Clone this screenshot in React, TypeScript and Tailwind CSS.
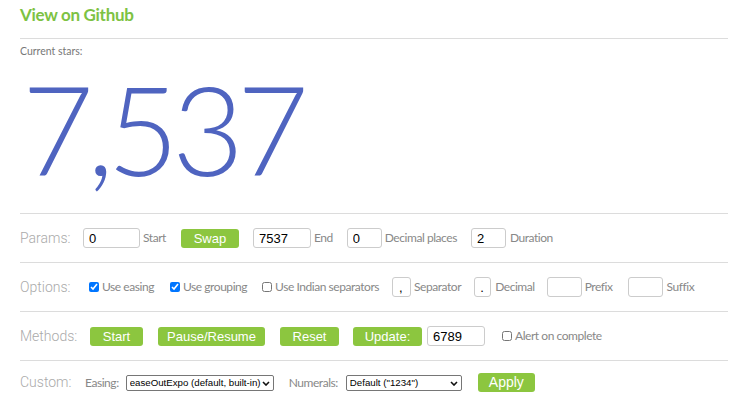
import React from "react";

const label =
  "shrink-0 whitespace-nowrap text-[12px] tracking-[-0.45px] text-[#888] font-['Lato',sans-serif]";
const rowTitle = "w-[63px] shrink-0 text-[14px] font-light text-[#aaa] font-['Roboto',sans-serif]";
const input =
  "h-[20px] shrink-0 rounded-[3px] border border-[#ccc] bg-white px-[5px] text-[13px] text-black font-['Liberation_Sans',Arial,sans-serif] outline-none";
const btn =
  "h-[19px] shrink-0 rounded-[3px] bg-[#8cc63f] text-[13px] text-white font-['Liberation_Sans',Arial,sans-serif] leading-[19px]";

function Row({ title, children, last }: { title: string; children: React.ReactNode; last?: boolean }) {
  return (
    <div className={`flex items-center border-t border-[#dcdcdc] ${last ? "h-[44px]" : "h-[49px]"}`}>
      <span className={rowTitle}>{title}</span>
      {children}
    </div>
  );
}

function Check({ checked, text, className }: { checked?: boolean; text: string; className?: string }) {
  return (
    <label className={`flex shrink-0 items-center ${className ?? ""}`}>
      <input type="checkbox" defaultChecked={checked} className="m-0 mr-[3px] h-[10px] w-[10px]" />
      <span className={label}>{text}</span>
    </label>
  );
}

function Select({ value, className }: { value: string; className: string }) {
  return (
    <div className={`relative h-[16px] shrink-0 ${className}`}>
      <select className="block h-[16px] w-full appearance-none rounded-[2px] border border-[#767676] bg-white pl-[3px] pr-[12px] text-[9.7px] leading-[14px] text-black font-['Liberation_Sans',Arial,sans-serif]">
        <option>{value}</option>
      </select>
      <svg
        className="pointer-events-none absolute right-[4px] top-[6px]"
        width="8"
        height="5"
        viewBox="0 0 8 5"
        fill="none"
      >
        <path d="M1 1L4 4L7 1" stroke="#111" strokeWidth="1.6" />
      </svg>
    </div>
  );
}

export default function App() {
  return (
    <div className="w-[730px] h-[404px] overflow-hidden bg-white">
      <div className="ml-5 w-[708px]">
        <div className="h-[38px] pt-[4px]">
          <h1 className="text-[17px] leading-[22px] font-bold tracking-[-0.3px] text-[#7dc243] font-['Lato',sans-serif]">
            View on Github
          </h1>
        </div>
        <div className="h-[175px] border-t border-[#dcdcdc]">
          <p className="mt-[6px] text-[10.5px] leading-[12px] text-[#777] font-['Lato',sans-serif]">
            Current stars:
          </p>
          <div className="ml-[2px] mt-[21px] text-[124px] leading-[100px] font-light tracking-[-7px] text-[#4f64c0] font-['Lato',sans-serif]">
            7,537
          </div>
        </div>

        <Row title="Params:">
          <input className={`${input} w-[57px]`} defaultValue="0" />
          <span className={`${label} ml-[3px]`}>Start</span>
          <button className={`${btn} ml-[15px] w-[58px]`}>Swap</button>
          <input className={`${input} ml-[14px] w-[58px]`} defaultValue="7537" />
          <span className={`${label} ml-[3px]`}>End</span>
          <input className={`${input} ml-[14px] w-[35px]`} defaultValue="0" />
          <span className={`${label} ml-[3px]`}>Decimal places</span>
          <input className={`${input} ml-[14px] w-[35px]`} defaultValue="2" />
          <span className={`${label} ml-[4px]`}>Duration</span>
        </Row>

        <Row title="Options:">
          <Check checked text="Use easing" className="ml-[6px]" />
          <Check checked text="Use grouping" className="ml-[16px]" />
          <Check text="Use Indian separators" className="ml-[15px]" />
          <input className={`${input} ml-[13px] w-[19px] px-[6px] text-[11px]`} defaultValue="," />
          <span className={`${label} ml-[3px]`}>Separator</span>
          <input className={`${input} ml-[13px] w-[17px] px-[5px] text-[11px]`} defaultValue="." />
          <span className={`${label} ml-[4px]`}>Decimal</span>
          <input className={`${input} ml-[12px] w-[35px]`} />
          <span className={`${label} ml-[3px]`}>Prefix</span>
          <input className={`${input} ml-[15px] w-[35px]`} />
          <span className={`${label} ml-[4px]`}>Suffix</span>
        </Row>

        <Row title="Methods:">
          <button className={`${btn} ml-[7px] w-[53px]`}>Start</button>
          <button className={`${btn} ml-[15px] w-[107px]`}>Pause/Resume</button>
          <button className={`${btn} ml-[15px] w-[59px]`}>Reset</button>
          <button className={`${btn} ml-[14px] w-[69px]`}>Update:</button>
          <input className={`${input} ml-[5px] w-[58px]`} defaultValue="6789" />
          <Check text="Alert on complete" className="ml-[17px]" />
        </Row>

        <Row title="Custom:" last>
          <span className={`${label} ml-[2px]`}>Easing:</span>
          <Select value="easeOutExpo (default, built-in)" className="ml-[7px] w-[148px]" />
          <span className={`${label} ml-[15px]`}>Numerals:</span>
          <Select value={'Default ("1234")'} className="ml-[8px] w-[116px]" />
          <button className={`${btn} ml-[16px] w-[57px] text-[14px]`}>Apply</button>
        </Row>
      </div>
    </div>
  );
}
